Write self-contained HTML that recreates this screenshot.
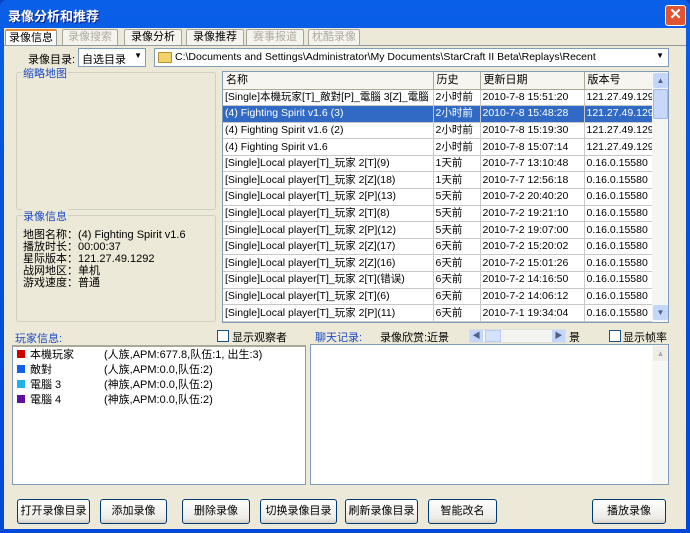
<!DOCTYPE html>
<html><head><meta charset="utf-8"><style>
*{box-sizing:border-box;margin:0;padding:0}
body{width:690px;height:533px;overflow:hidden;font-family:"Liberation Sans","Noto Sans CJK SC",sans-serif;font-size:11px;color:#000;position:relative;background:#0842c8}
.a{position:absolute;white-space:nowrap}
#win{left:0;top:0;width:690px;height:533px;background:linear-gradient(#0a5fe8,#0454e0 30%,#0048d8);border-radius:7px 7px 0 0}
#title{left:8px;top:6px;color:#fff;font-weight:bold;font-size:13px;text-shadow:1px 1px #0a1e80}
#close{left:665px;top:5px;width:21px;height:21px;background:#e0552f;border:1px solid #fff;border-radius:3px;color:#fff;font-weight:bold;font-size:15px;text-align:center;line-height:18px}
#body{left:4px;top:28px;width:682px;height:501px;background:#ece9d8}
.tab{top:29px;height:16px;font-size:11px;line-height:14px;text-align:center;border:1px solid #a8a698;border-bottom:none;background:#f4f3ee;border-radius:2px 2px 0 0}
.dis{color:#b0ad9e}
.grp{border:1px solid #d0cfc0;border-radius:3px}
.gl{color:#1c4ac0;font-size:11px;background:#ece9d8;padding:0 1px}
.sel{background:#fff;border:1px solid #7f9db9}
table{border-collapse:collapse;font-size:10.5px}
td{height:16.6px;line-height:15px;border-right:1px solid #c8c8c8;border-bottom:1px solid #c8c8c8;padding-left:2px;white-space:nowrap;overflow:hidden}
th{height:17px;line-height:15px;font-weight:normal;text-align:left;padding-left:3px;border-right:1px solid #aca899;border-bottom:1px solid #aca899;background:#f6f5ef;font-size:11px}
tr.s td{background:#316ac5;color:#fff}
.btn{top:499px;height:25px;border:1px solid #003c74;border-radius:3px;background:linear-gradient(#fff,#ecebe6 80%,#d6d0c5);text-align:center;line-height:23px;font-size:11px;white-space:nowrap;overflow:hidden}
.sq{display:inline-block;width:8px;height:8px;margin-right:5px}
.nm{display:inline-block;width:74px}
.cb{width:12px;height:12px;border:1px solid #1c5180;background:#fff}
</style></head><body>
<div id="win" class="a"></div>
<div id="title" class="a">录像分析和推荐</div>
<div id="close" class="a">✕</div>
<div id="body" class="a"></div>

<div class="a tab" style="left:5px;width:52px;background:#fff;border-color:#919b9c;border-top:2px solid #e68b2c">录像信息</div>
<div class="a tab dis" style="left:62px;width:56px">录像搜索</div>
<div class="a tab" style="left:124px;width:58px">录像分析</div>
<div class="a tab" style="left:186px;width:58px">录像推荐</div>
<div class="a tab dis" style="left:246px;width:58px">赛事报道</div>
<div class="a tab dis" style="left:308px;width:52px">枕酷录像</div>
<div class="a" style="left:4px;top:45px;width:682px;height:1px;background:#919b9c"></div>

<div class="a" style="left:28px;top:51px;font-size:11px">录像目录:</div>
<div class="a sel" style="left:78px;top:48px;width:68px;height:19px;font-size:11px;padding:2px 3px">自选目录<span class="a" style="right:3px;top:2px;font-size:8px">▼</span></div>
<div class="a sel" style="left:154px;top:48px;width:515px;height:19px;padding:2px 0 0 20px;font-size:10.5px">C:\Documents and Settings\Administrator\My Documents\StarCraft II Beta\Replays\Recent
<span class="a" style="left:3px;top:3px;width:14px;height:11px;background:#f2d26a;border:1px solid #b8902a;border-radius:1px"></span><span class="a" style="right:4px;top:2px;font-size:8px">▼</span></div>

<div class="a grp" style="left:16px;top:72px;width:200px;height:138px"></div>
<div class="a gl" style="left:22px;top:65px">缩略地图</div>
<div class="a grp" style="left:16px;top:215px;width:200px;height:107px"></div>
<div class="a gl" style="left:22px;top:208px">录像信息</div>
<div class="a" style="left:23px;top:229px;font-size:11px;line-height:12px">地图名称：(4) Fighting Spirit v1.6<br>播放时长：00:00:37<br>星际版本：121.27.49.1292<br>战网地区：单机<br>游戏速度：普通</div>

<div class="a" style="left:222px;top:71px;width:447px;height:252px;background:#fff;border:1px solid #7f9db9;overflow:hidden">
<table style="width:430px;table-layout:fixed">
<colgroup><col style="width:210px"><col style="width:47px"><col style="width:104px"><col style="width:69px"></colgroup>
<tr><th>名称</th><th>历史</th><th>更新日期</th><th>版本号</th></tr>
<tr><td>[Single]本機玩家[T]_敵對[P]_電腦 3[Z]_電腦</td><td>2小时前</td><td>2010-7-8 15:51:20</td><td>121.27.49.1292</td></tr>
<tr class="s"><td>(4) Fighting Spirit v1.6 (3)</td><td>2小时前</td><td>2010-7-8 15:48:28</td><td>121.27.49.1292</td></tr>
<tr><td>(4) Fighting Spirit v1.6 (2)</td><td>2小时前</td><td>2010-7-8 15:19:30</td><td>121.27.49.1292</td></tr>
<tr><td>(4) Fighting Spirit v1.6</td><td>2小时前</td><td>2010-7-8 15:07:14</td><td>121.27.49.1292</td></tr>
<tr><td>[Single]Local player[T]_玩家 2[T](9)</td><td>1天前</td><td>2010-7-7 13:10:48</td><td>0.16.0.15580</td></tr>
<tr><td>[Single]Local player[T]_玩家 2[Z](18)</td><td>1天前</td><td>2010-7-7 12:56:18</td><td>0.16.0.15580</td></tr>
<tr><td>[Single]Local player[T]_玩家 2[P](13)</td><td>5天前</td><td>2010-7-2 20:40:20</td><td>0.16.0.15580</td></tr>
<tr><td>[Single]Local player[T]_玩家 2[T](8)</td><td>5天前</td><td>2010-7-2 19:21:10</td><td>0.16.0.15580</td></tr>
<tr><td>[Single]Local player[T]_玩家 2[P](12)</td><td>5天前</td><td>2010-7-2 19:07:00</td><td>0.16.0.15580</td></tr>
<tr><td>[Single]Local player[T]_玩家 2[Z](17)</td><td>6天前</td><td>2010-7-2 15:20:02</td><td>0.16.0.15580</td></tr>
<tr><td>[Single]Local player[T]_玩家 2[Z](16)</td><td>6天前</td><td>2010-7-2 15:01:26</td><td>0.16.0.15580</td></tr>
<tr><td>[Single]Local player[T]_玩家 2[T](错误)</td><td>6天前</td><td>2010-7-2 14:16:50</td><td>0.16.0.15580</td></tr>
<tr><td>[Single]Local player[T]_玩家 2[T](6)</td><td>6天前</td><td>2010-7-2 14:06:12</td><td>0.16.0.15580</td></tr>
<tr><td>[Single]Local player[T]_玩家 2[P](11)</td><td>6天前</td><td>2010-7-1 19:34:04</td><td>0.16.0.15580</td></tr>
</table>
<div class="a" style="left:429px;top:0;width:16px;height:250px;background:#f5f5f2"></div>
<div class="a" style="left:430px;top:1px;width:15px;height:15px;background:#c4d6fc;border-radius:2px;font-size:8px;color:#4d6185;text-align:center;line-height:15px">▲</div>
<div class="a" style="left:430px;top:17px;width:15px;height:30px;background:#c8d8fa;border:1px solid #9db8ec;border-radius:2px"></div>
<div class="a" style="left:430px;top:233px;width:15px;height:15px;background:#c4d6fc;border-radius:2px;font-size:8px;color:#4d6185;text-align:center;line-height:15px">▼</div>
</div>

<div class="a gl" style="left:14px;top:330px">玩家信息:</div>
<div class="a cb" style="left:217px;top:330px"></div>
<div class="a" style="left:232px;top:329px;font-size:11px">显示观察者</div>
<div class="a" style="left:12px;top:345px;width:294px;height:140px;background:#fff;border:1px solid #7f9db9;border-top:2px solid #aca899;padding:1px 4px;line-height:15px;font-size:11px">
<div><span class="sq" style="background:#c00"></span><span class="nm">本機玩家</span>(人族,APM:677.8,队伍:1, 出生:3)</div>
<div><span class="sq" style="background:#1060e8"></span><span class="nm">敵對</span>(人族,APM:0.0,队伍:2)</div>
<div><span class="sq" style="background:#20b0f0"></span><span class="nm">電腦 3</span>(神族,APM:0.0,队伍:2)</div>
<div><span class="sq" style="background:#6010a0"></span><span class="nm">電腦 4</span>(神族,APM:0.0,队伍:2)</div>
</div>

<div class="a gl" style="left:314px;top:329px">聊天记录:</div>
<div class="a" style="left:380px;top:329px;font-size:11px">录像欣赏:近景</div>
<div class="a" style="left:469px;top:329px;width:97px;height:14px;background:#f4f4f0;border:1px solid #ddd"></div>
<div class="a" style="left:470px;top:330px;width:13px;height:12px;background:#c4d6fc;font-size:8px;color:#4d6185;text-align:center;line-height:12px">◀</div>
<div class="a" style="left:485px;top:330px;width:16px;height:12px;background:#d4e2fc;border:1px solid #b8cdf4"></div>
<div class="a" style="left:552px;top:330px;width:13px;height:12px;background:#c4d6fc;font-size:8px;color:#4d6185;text-align:center;line-height:12px">▶</div>
<div class="a" style="left:569px;top:329px;font-size:11px">景</div>
<div class="a cb" style="left:609px;top:330px"></div>
<div class="a" style="left:623px;top:329px;font-size:11px">显示帧率</div>
<div class="a" style="left:310px;top:344px;width:359px;height:141px;background:#fff;border:1px solid #7f9db9">
<div class="a" style="right:0;top:0;width:16px;height:139px;background:#f7f7f4"></div>
<div class="a" style="right:0;top:1px;width:15px;height:15px;background:#eeede6;font-size:8px;color:#aaa;text-align:center;line-height:15px">▲</div>
</div>

<div class="a btn" style="left:17px;width:73px">打开录像目录</div>
<div class="a btn" style="left:100px;width:67px">添加录像</div>
<div class="a btn" style="left:182px;width:68px">删除录像</div>
<div class="a btn" style="left:260px;width:77px">切换录像目录</div>
<div class="a btn" style="left:345px;width:73px">刷新录像目录</div>
<div class="a btn" style="left:428px;width:69px">智能改名</div>
<div class="a btn" style="left:592px;width:74px">播放录像</div>
</body></html>
